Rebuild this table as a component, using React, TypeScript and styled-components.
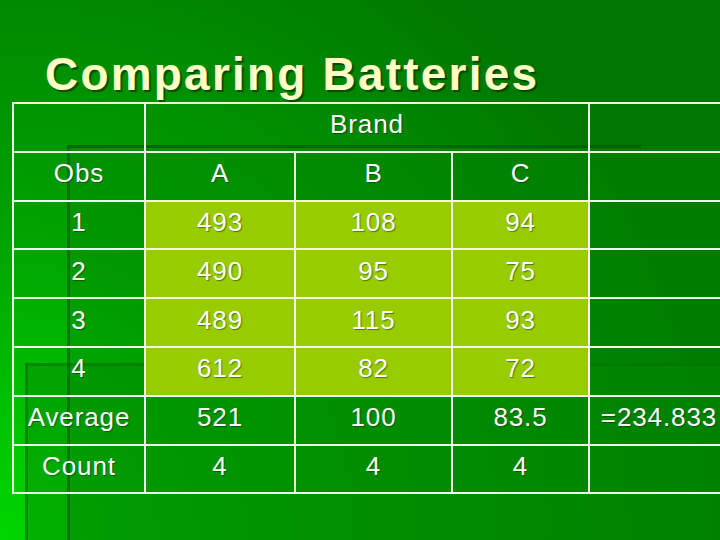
import React from "react";
import styled, { createGlobalStyle } from "styled-components";

const GlobalStyle = createGlobalStyle`
  html, body {
    margin: 0;
    padding: 0;
    background: #007a00;
  }
`;

const Slide = styled.div`
  position: relative;
  width: 720px;
  height: 540px;
  overflow: hidden;
  padding-top: 51px;
  box-sizing: border-box;
  font-family: "Liberation Sans", Arial, sans-serif;
`;

// slide design art, sits behind everything
const Backdrop = styled.svg`
  position: absolute;
  left: 0;
  top: 0;
  width: 720px;
  height: 540px;
  z-index: 0;
`;

const Content = styled.div`
  position: relative;
  z-index: 1;
`;

const Title = styled.h1`
  margin: 0;
  height: 51px;
  padding-left: 45px;
  font-size: 46px;
  line-height: 46px;
  font-weight: bold;
  letter-spacing: 2.2px;
  color: #ffffc6;
  text-shadow: 2px 2px 1px rgba(0, 50, 0, 0.7);
  white-space: nowrap;
`;

const DataTable = styled.table`
  margin-left: 12px;
  width: 716px;
  table-layout: fixed;
  border-collapse: collapse;
`;

const Row = styled.tr`
  height: 48.8px;
`;

const Cell = styled.td<{ $highlight?: boolean }>`
  border: 2px solid #f2f6e4;
  padding: 0 0 5px 0;
  text-align: center;
  vertical-align: middle;
  white-space: nowrap;
  font-size: 26px;
  letter-spacing: 0.9px;
  color: #ffffff;
  text-shadow: 1px 1px 1px rgba(0, 40, 0, 0.5);
  background: ${(p) => (p.$highlight ? "#99cc00" : "transparent")};
`;

const widths = [132, 150, 157, 137, 140];

const observations = [
  ["1", "493", "108", "94"],
  ["2", "490", "95", "75"],
  ["3", "489", "115", "93"],
  ["4", "612", "82", "72"],
];

const SlideArt = () => (
  <Backdrop viewBox="0 0 720 540">
    <defs>
      <radialGradient id="bg" gradientUnits="userSpaceOnUse" cx="0" cy="540" r="720">
        <stop offset="0" stopColor="#00d600" />
        <stop offset="0.45" stopColor="#00a000" />
        <stop offset="1" stopColor="#007600" />
      </radialGradient>
    </defs>
    <rect x="0" y="0" width="720" height="540" fill="url(#bg)" />
    <rect x="25" y="363" width="695" height="177" fill="#008a00" opacity="0.45" />
    <rect x="67" y="146" width="653" height="394" fill="#008800" opacity="0.4" />
    <rect x="25" y="363" width="695" height="3" fill="#007000" opacity="0.5" />
    <rect x="25" y="363" width="3" height="177" fill="#007400" opacity="0.6" />
    <rect x="67" y="145" width="574" height="3" fill="#005c00" opacity="0.8" />
    <rect x="67" y="145" width="3" height="395" fill="#006800" opacity="0.7" />
  </Backdrop>
);

export default function App() {
  return (
    <>
      <GlobalStyle />
      <Slide>
        <SlideArt />
        <Content>
          <Title>Comparing Batteries</Title>
          <DataTable>
            <colgroup>
              {widths.map((w, i) => (
                <col key={i} style={{ width: w }} />
              ))}
            </colgroup>
            <tbody>
              <Row>
                <Cell />
                <Cell colSpan={3}>Brand</Cell>
                <Cell />
              </Row>
              <Row>
                <Cell>Obs</Cell>
                <Cell>A</Cell>
                <Cell>B</Cell>
                <Cell>C</Cell>
                <Cell />
              </Row>
              {observations.map(([obs, a, b, c]) => (
                <Row key={obs}>
                  <Cell>{obs}</Cell>
                  <Cell $highlight>{a}</Cell>
                  <Cell $highlight>{b}</Cell>
                  <Cell $highlight>{c}</Cell>
                  <Cell />
                </Row>
              ))}
              <Row>
                <Cell>Average</Cell>
                <Cell>521</Cell>
                <Cell>100</Cell>
                <Cell>83.5</Cell>
                <Cell>=234.833</Cell>
              </Row>
              <Row>
                <Cell>Count</Cell>
                <Cell>4</Cell>
                <Cell>4</Cell>
                <Cell>4</Cell>
                <Cell />
              </Row>
            </tbody>
          </DataTable>
        </Content>
      </Slide>
    </>
  );
}
